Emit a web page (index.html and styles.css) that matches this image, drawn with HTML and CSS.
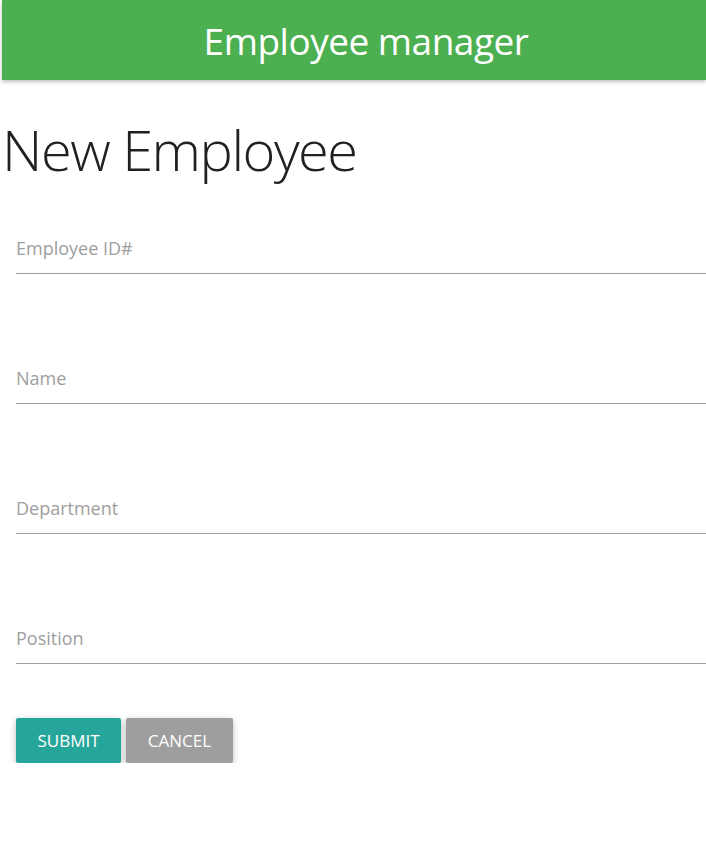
FILE: index.html
```html
<!DOCTYPE html>
<html>
<head>
<meta charset="utf-8">
<link rel="stylesheet" href="styles.css">
</head>
<body>
<header class="topbar"><span class="brand">Employee manager</span></header>
<h1 class="page-title">New Employee</h1>
<form class="form">
  <div class="field"><label class="field-label">Employee ID#</label></div>
  <div class="field"><label class="field-label">Name</label></div>
  <div class="field"><label class="field-label">Department</label></div>
  <div class="field"><label class="field-label">Position</label></div>
  <div class="actions">
    <button type="button" class="btn btn-submit">SUBMIT</button>
    <button type="button" class="btn btn-cancel">CANCEL</button>
  </div>
</form>
</body>
</html>
```
FILE: styles.css
```css
html, body {
  margin: 0;
  padding: 0;
  background: #ffffff;
  font-family: "Open Sans", "Noto Sans", sans-serif;
}
.topbar {
  margin-left: 2px;
  height: 80px;
  background: #4caf50;
  box-shadow: 0 2px 4px rgba(0,0,0,0.25);
  display: flex;
  align-items: center;
  justify-content: center;
  padding-left: 24px;
}
.brand {
  color: #ffffff;
  font-size: 37px;
  line-height: 1;
  letter-spacing: -0.5px;
}
.page-title {
  margin: 34px 0 0 2px;
  font-size: 56px;
  line-height: 70px;
  font-weight: 300;
  color: #212121;
  letter-spacing: -1.5px;
}
.form {
  padding-left: 16px;
}
.field {
  margin-top: 93px;
  padding-bottom: 13px;
  border-bottom: 1px solid #9e9e9e;
}
.field:first-child {
  margin-top: 53px;
}
.field-label {
  display: block;
  font-size: 18px;
  line-height: 23px;
  color: #9e9e9e;
}
.actions {
  margin-top: 54px;
  display: flex;
  gap: 5px;
}
.btn {
  height: 45px;
  border: none;
  border-radius: 2px;
  color: #ffffff;
  font-family: "Open Sans", "Noto Sans", sans-serif;
  font-size: 17px;
  padding: 0;
  box-shadow: 0 2px 5px rgba(0,0,0,0.16), 0 2px 10px rgba(0,0,0,0.12);
}
.btn-submit {
  background: #26a69a;
  width: 105px;
}
.btn-cancel {
  background: #9e9e9e;
  width: 107px;
}
```
